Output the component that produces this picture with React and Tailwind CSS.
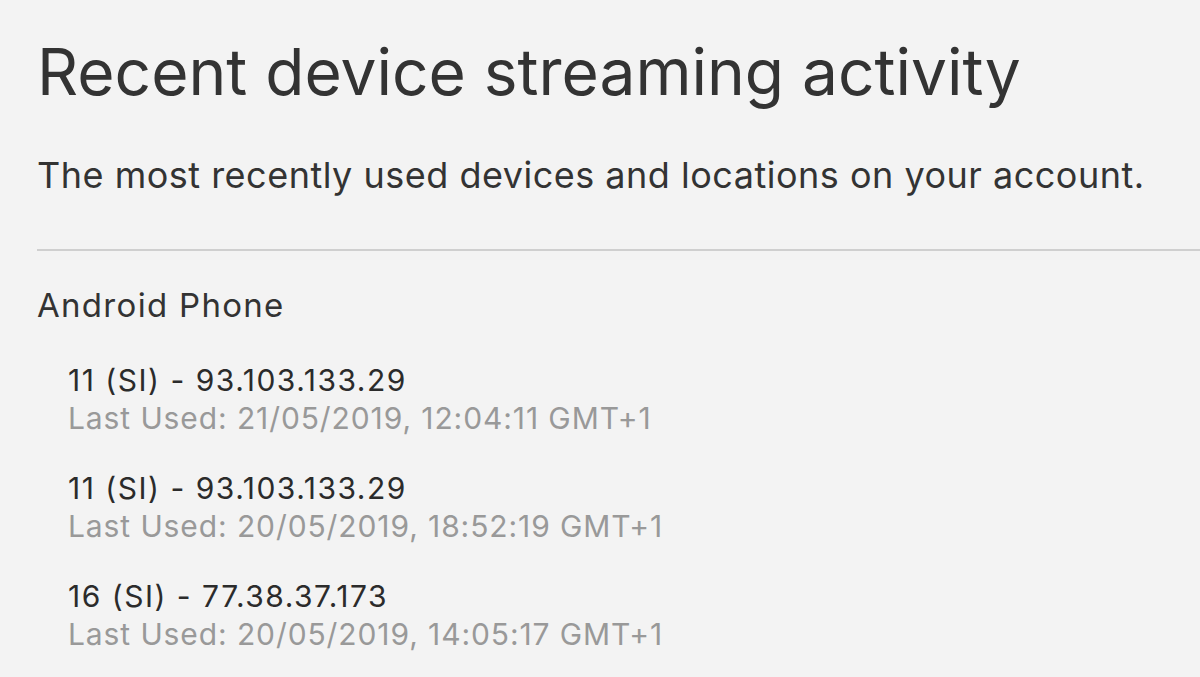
export default function App() {
  const entries = [
    { title: "11 (SI) - 93.103.133.29", used: "Last Used: 21/05/2019, 12:04:11 GMT+1" },
    { title: "11 (SI) - 93.103.133.29", used: "Last Used: 20/05/2019, 18:52:19 GMT+1" },
    { title: "16 (SI) - 77.38.37.173", used: "Last Used: 20/05/2019, 14:05:17 GMT+1" },
  ];
  return (
    <div className="w-[1200px] h-[677px] overflow-hidden bg-[#f3f3f3] text-[#333333] pl-[37px] pt-[39px]" style={{ fontFamily: "Inter, Roboto, 'Liberation Sans', sans-serif" }}>
      <h1 className="text-[64px] leading-[66px] whitespace-nowrap">Recent device streaming activity</h1>
      <p className="mt-[46px] text-[36px] leading-[48px] tracking-[0.5px] whitespace-nowrap">The most recently used devices and locations on your account.</p>
      <div className="mt-[50px] h-[2px] bg-[#cfcfcf]" />
      <h2 className="mt-[34px] text-[33px] leading-[40px] tracking-[1.3px]">Android Phone</h2>
      <div className="mt-[37px] pl-[31px] flex flex-col gap-[34px]">
        {entries.map((e, i) => (
          <div key={i}>
            <div className="text-[30px] leading-[36px] tracking-[1.5px] text-[#2b2b2b] whitespace-nowrap">{e.title}</div>
            <div className="mt-[2px] text-[30px] leading-[36px] tracking-[0.9px] text-[#999999] whitespace-nowrap">{e.used}</div>
          </div>
        ))}
      </div>
    </div>
  );
}
